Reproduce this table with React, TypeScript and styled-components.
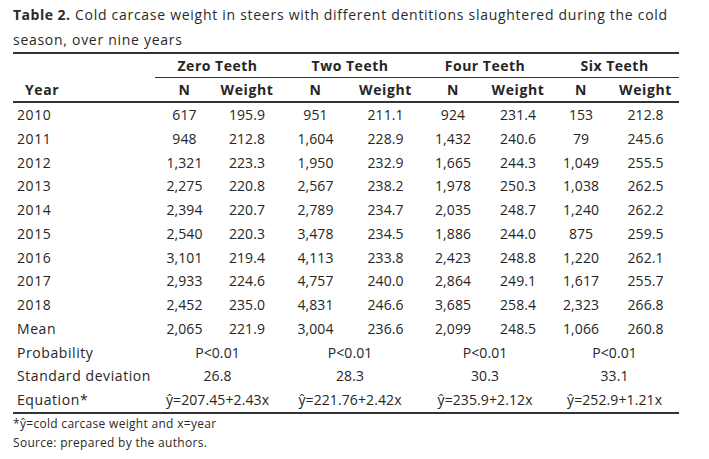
import React from "react";
import styled, { createGlobalStyle } from "styled-components";

const Global = createGlobalStyle`
  * { box-sizing: border-box; }
  html, body { margin: 0; padding: 0; background: #ffffff; }
  body { font-family: "Open Sans", "Liberation Sans", sans-serif; color: #262626; }
`;

const Page = styled.div`
  width: 666px;
  margin-left: 13px;
  padding-top: 1.5px;
`;

const Caption = styled.p`
  margin: 0;
  font-size: 14px;
  line-height: 25px;
  letter-spacing: 0.72px;
  color: #2a2a2a;
`;

const Label = styled.b`
  font-weight: 700;
  letter-spacing: 0.5px;
`;

const Table = styled.table`
  width: 666px;
  table-layout: fixed;
  border-collapse: separate;
  border-spacing: 0;
  border-top: 2px solid #333;
  border-bottom: 2px solid #333;
  font-size: 14px;
`;

const GroupTh = styled.th<{ $line?: boolean }>`
  padding: 0;
  font-weight: 700;
  line-height: 23px;
  letter-spacing: 0.5px;
  text-align: center;
  border-bottom: 1px solid ${(p) => (p.$line ? "#333" : "transparent")};
`;

const SubTh = styled.th<{ $left?: boolean }>`
  padding: 0 0 0 ${(p) => (p.$left ? "12px" : "0")};
  font-weight: 700;
  line-height: 23.5px;
  letter-spacing: 0.6px;
  text-align: ${(p) => (p.$left ? "left" : "center")};
  border-bottom: 2px solid #333;
`;

const Td = styled.td<{ $left?: boolean }>`
  padding: 0 0 0 ${(p) => (p.$left ? "4px" : "0")};
  line-height: 23.75px;
  letter-spacing: ${(p) => (p.$left ? "0.58px" : "0.1px")};
  text-align: ${(p) => (p.$left ? "left" : "center")};
  white-space: nowrap;
`;

const Notes = styled.div`
  font-size: 12px;
  line-height: 19px;
  letter-spacing: 0.3px;
  color: #2a2a2a;
`;

const widths = [142, 59, 66, 71, 69, 66, 64, 62, 67];

const data: [string, string, string, string, string, string, string, string, string][] = [
  ["2010", "617", "195.9", "951", "211.1", "924", "231.4", "153", "212.8"],
  ["2011", "948", "212.8", "1,604", "228.9", "1,432", "240.6", "79", "245.6"],
  ["2012", "1,321", "223.3", "1,950", "232.9", "1,665", "244.3", "1,049", "255.5"],
  ["2013", "2,275", "220.8", "2,567", "238.2", "1,978", "250.3", "1,038", "262.5"],
  ["2014", "2,394", "220.7", "2,789", "234.7", "2,035", "248.7", "1,240", "262.2"],
  ["2015", "2,540", "220.3", "3,478", "234.5", "1,886", "244.0", "875", "259.5"],
  ["2016", "3,101", "219.4", "4,113", "233.8", "2,423", "248.8", "1,220", "262.1"],
  ["2017", "2,933", "224.6", "4,757", "240.0", "2,864", "249.1", "1,617", "255.7"],
  ["2018", "2,452", "235.0", "4,831", "246.6", "3,685", "258.4", "2,323", "266.8"],
  ["Mean", "2,065", "221.9", "3,004", "236.6", "2,099", "248.5", "1,066", "260.8"],
];

const merged: [string, string[]][] = [
  ["Probability", ["P<0.01", "P<0.01", "P<0.01", "P<0.01"]],
  ["Standard deviation", ["26.8", "28.3", "30.3", "33.1"]],
  ["Equation*", ["ŷ=207.45+2.43x", "ŷ=221.76+2.42x", "ŷ=235.9+2.12x", "ŷ=252.9+1.21x"]],
];

const groups = ["Zero Teeth", "Two Teeth", "Four Teeth", "Six Teeth"];

export default function App() {
  return (
    <>
      <Global />
      <Page>
        <Caption>
          <Label>Table 2.</Label> Cold carcase weight in steers with different dentitions slaughtered during the cold
          season, over nine years
        </Caption>
        <Table>
          <colgroup>
            {widths.map((w, i) => (
              <col key={i} style={{ width: w }} />
            ))}
          </colgroup>
          <thead>
            <tr>
              <GroupTh />
              {groups.map((g) => (
                <GroupTh key={g} colSpan={2} $line>
                  {g}
                </GroupTh>
              ))}
            </tr>
            <tr>
              <SubTh $left>Year</SubTh>
              {groups.map((g) => (
                <React.Fragment key={g}>
                  <SubTh>N</SubTh>
                  <SubTh>Weight</SubTh>
                </React.Fragment>
              ))}
            </tr>
          </thead>
          <tbody>
            {data.map((row) => (
              <tr key={row[0]}>
                {row.map((c, i) => (
                  <Td key={i} $left={i === 0}>
                    {c}
                  </Td>
                ))}
              </tr>
            ))}
            {merged.map(([label, vals]) => (
              <tr key={label}>
                <Td $left>{label}</Td>
                {vals.map((v, i) => (
                  <Td key={i} colSpan={2}>
                    {v}
                  </Td>
                ))}
              </tr>
            ))}
          </tbody>
        </Table>
        <Notes>
          <div>*ŷ=cold carcase weight and x=year</div>
          <div>Source: prepared by the authors.</div>
        </Notes>
      </Page>
    </>
  );
}
